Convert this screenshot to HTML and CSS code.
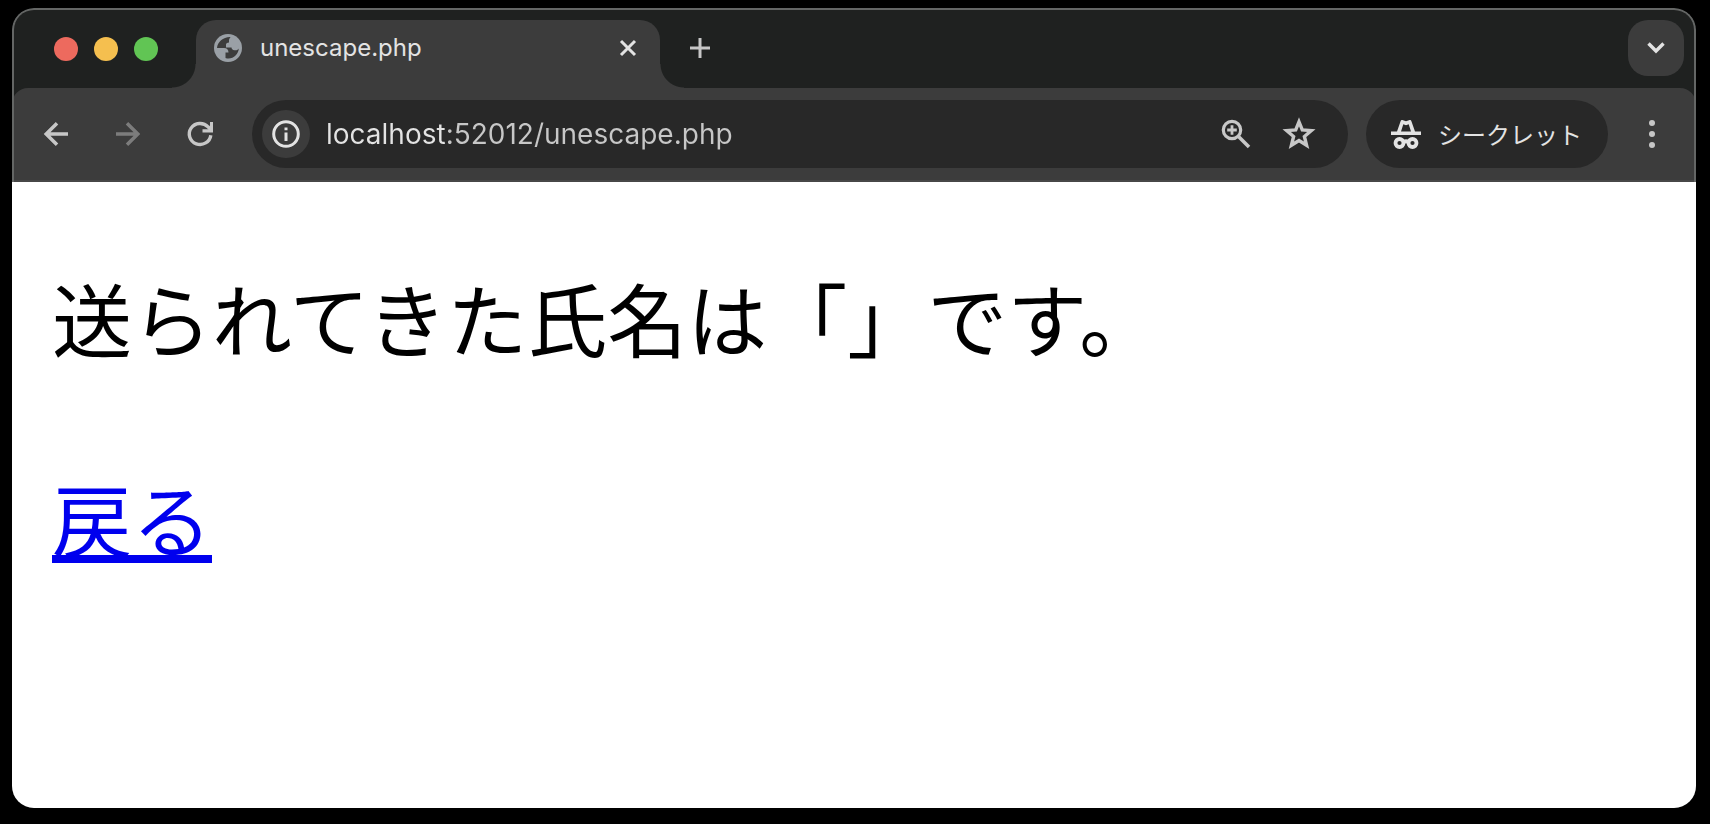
FILE: index.html
```html
<!DOCTYPE html>
<html lang="ja">
<head>
<meta charset="utf-8">
<title>unescape.php</title>
<link rel="stylesheet" href="styles.css">
</head>
<body>
<div class="window">
  <header class="tab-strip">
    <div class="lights">
      <button class="light light-close" aria-label="閉じる"></button>
      <button class="light light-min" aria-label="最小化"></button>
      <button class="light light-max" aria-label="最大化"></button>
    </div>
    <div class="tab">
      <svg class="globe" viewBox="0 0 28 28" aria-hidden="true">
        <circle cx="14" cy="14" r="14" fill="#9aa0a6"/>
        <path fill="#3c3c3c" d="M16 3C9 3 3.500 8 3 14H10C13 14 14.500 16 14.500 18.500H11.500V24C12.500 24.400 13.500 24.500 14.500 24.500C20 24.300 24.500 20 24.800 14.500C24 16 22.500 16.500 20.500 16.200C18.500 16 17.500 15 17.500 13.500H12V10.500C12 9.500 13 8.500 15 8.500V6.500C15 5 15.500 4 16.500 3.500Z"/>
      </svg>
      <span class="tab-title">unescape.php</span>
      <button class="tab-close" aria-label="タブを閉じる">
        <svg viewBox="0 0 16 16"><path d="M1 1 15 15M15 1 1 15" stroke="#e3e3e3" stroke-width="3" fill="none"/></svg>
      </button>
    </div>
    <button class="new-tab" aria-label="新しいタブ">
      <svg viewBox="0 0 20 20"><path d="M10 0V20M0 10H20" stroke="#c7c7c7" stroke-width="3" fill="none"/></svg>
    </button>
    <button class="tab-search" aria-label="タブを検索">
      <svg viewBox="0 0 18 12"><path d="M1.500 1.500 9 9 16.500 1.500" stroke="#e3e3e3" stroke-width="3.400" fill="none"/></svg>
    </button>
  </header>
  <nav class="toolbar">
    <div class="nav-buttons">
      <button class="tool" aria-label="戻る">
        <svg viewBox="0 0 24 24"><path d="M13 1.200 2.200 12 13 22.800M2 12H24" stroke="#c7c7c7" stroke-width="3.500" fill="none"/></svg>
      </button>
      <button class="tool" aria-label="進む" disabled>
        <svg viewBox="0 0 24 24"><path d="M11 1.200 21.800 12 11 22.800M22 12H0" stroke="#7c7c7c" stroke-width="3.500" fill="none"/></svg>
      </button>
      <button class="tool" aria-label="再読み込み">
        <svg viewBox="0 0 24 24"><path d="M22.800 13.200A10.800 10.500 0 1 1 20 4.800L23 7.800" stroke="#c7c7c7" stroke-width="3.400" fill="none"/><path d="M22 0H25V10.500H14.500V7.200H22Z" fill="#c7c7c7"/></svg>
      </button>
    </div>
    <div class="omnibox">
      <button class="site-info" aria-label="サイト情報">
        <svg viewBox="0 0 28 28"><circle cx="14" cy="14" r="12.300" stroke="#e3e3e3" stroke-width="3" fill="none"/><path d="M12.500 12.500H15.500V21H12.500ZM12.500 7.500H15.500V10.300H12.500Z" fill="#e3e3e3"/></svg>
      </button>
      <input class="url" type="text" value="localhost:52012/unescape.php" aria-label="アドレス" spellcheck="false">
      <button class="omni-action" aria-label="ズーム">
        <svg viewBox="0 0 28 28"><circle cx="10" cy="10" r="8.700" stroke="#c7c7c7" stroke-width="3.200" fill="none"/><path d="M16.500 16.500 27 27" stroke="#c7c7c7" stroke-width="3.600"/><path d="M10 5.200V14.800M5.200 10H14.800" stroke="#c7c7c7" stroke-width="2.800"/></svg>
      </button>
      <button class="omni-action star" aria-label="ブックマークに追加">
        <svg viewBox="0 0 34 34"><path d="M17 4.800 20.300 12.900 29.300 13.600 22.400 19.500 24.600 28.300 17 23.600 9.400 28.300 11.600 19.500 4.700 13.600 13.700 12.900Z" stroke="#c7c7c7" stroke-width="3.400" fill="none"/></svg>
      </button>
    </div>
    <button class="incognito">
      <svg viewBox="0 0 30 29" aria-hidden="true"><path fill="#e3e3e3" fill-rule="evenodd" d="M0 11.500H6L9.500 1.500C9.900 .3 10.800-.200 12 .200L15 1.200 18 .200C19.200-.200 20.100.300 20.500 1.500L24 11.500H30V15H0ZM10 11.500H20L17.700 4.200 15 5.200 12.300 4.200Z"/><g fill="none" stroke="#e3e3e3" stroke-width="3.800"><circle cx="8.500" cy="23" r="4"/><circle cx="21.500" cy="23" r="4"/><path d="M12.500 22Q15 20.500 17.500 22"/></g></svg>
      <span>シークレット</span>
    </button>
    <button class="menu" aria-label="メニュー">
      <svg viewBox="0 0 6 28"><g fill="#c7c7c7"><circle cx="3" cy="3" r="3"/><circle cx="3" cy="14" r="3"/><circle cx="3" cy="25" r="3"/></g></svg>
    </button>
  </nav>
  <main class="page">
    <p>送られてきた氏名は「」です。</p>
    <p><a href="#">戻る</a></p>
  </main>
</div>
</body>
</html>
```
FILE: styles.css
```css
* {
  box-sizing: border-box;
}

body {
  margin: 0;
  min-height: 100vh;
  padding: 8px 14px 16px 12px;
  display: flex;
  background: #000;
  font-family: Inter, "Noto Sans CJK JP", sans-serif;
}

button {
  padding: 0;
  border: 0;
  background: none;
  color: inherit;
  font: inherit;
  flex: none;
  display: flex;
  align-items: center;
  justify-content: center;
}

svg {
  display: block;
  flex: none;
  overflow: visible;
}

.window {
  position: relative;
  flex: 1;
  min-width: 0;
  display: flex;
  flex-direction: column;
  border-radius: 22px;
  overflow: hidden;
  background: #1f2120;
}

/* hairline frame around the dark chrome area */
.window::after {
  content: "";
  position: absolute;
  inset: 0 0 auto;
  height: 172px;
  border: 2px solid #646665;
  border-bottom: 0;
  border-radius: 22px 22px 0 0;
  pointer-events: none;
}

.tab-strip {
  height: 80px;
  padding: 12px 12px 0 42px;
  display: flex;
}

.lights {
  width: 142px;
  height: 58px;
  display: flex;
  align-items: center;
  gap: 16px;
}

.light {
  width: 24px;
  height: 24px;
  border-radius: 50%;
}

.light-close { background: #ed6a5e; }
.light-min { background: #f5bf4f; }
.light-max { background: #61c554; }

.tab {
  position: relative;
  width: 464px;
  height: 68px;
  padding: 0 24px 12px 18px;
  display: flex;
  align-items: center;
  border-radius: 20px 20px 0 0;
  background: #3c3c3c;
}

.tab::before,
.tab::after {
  content: "";
  position: absolute;
  bottom: 0;
  width: 24px;
  height: 24px;
}

.tab::before {
  right: 100%;
  background: radial-gradient(circle at 0 0, transparent 23px, #3c3c3c 24px);
}

.tab::after {
  left: 100%;
  background: radial-gradient(circle at 100% 0, transparent 23px, #3c3c3c 24px);
}

.globe {
  width: 28px;
  height: 28px;
}

.tab-title {
  flex: 1;
  margin-left: 18px;
  color: #e3e3e3;
  font-size: 24px;
  line-height: 32px;
}

.tab-close svg {
  width: 16px;
  height: 16px;
}

.new-tab {
  width: 80px;
  height: 56px;
}

.new-tab svg {
  width: 20px;
  height: 20px;
}

.tab-search {
  width: 56px;
  height: 56px;
  margin-left: auto;
  border-radius: 20px;
  background: #3c3c3c;
}

.tab-search svg {
  width: 18px;
  height: 12px;
}

.toolbar {
  height: 94px;
  padding: 12px 28px 12px 32px;
  display: flex;
  align-items: center;
  border-bottom: 2px solid #474747;
  border-radius: 16px 16px 0 0;
  background: #3c3c3c;
}

.nav-buttons {
  display: flex;
  gap: 48px;
}

.tool svg {
  width: 24px;
  height: 24px;
}

.omnibox {
  flex: 1;
  min-width: 0;
  height: 68px;
  margin-left: 40px;
  padding: 0 32px 0 10px;
  display: flex;
  align-items: center;
  border-radius: 34px;
  background: #282828;
}

.site-info {
  width: 48px;
  height: 48px;
  border-radius: 50%;
  background: #3c3c3c;
}

.site-info svg,
.omni-action svg {
  width: 28px;
  height: 28px;
}

.url {
  flex: 1;
  min-width: 0;
  height: 40px;
  margin: 0 16px;
  padding: 0;
  border: 0;
  outline: 0;
  background: linear-gradient(90deg, #e3e3e3 120px, #c7c7c7 120px);
  -webkit-background-clip: text;
  background-clip: text;
  -webkit-text-fill-color: transparent;
  font-family: inherit;
  font-size: 28px;
  line-height: 40px;
}

.omni-action.star {
  margin-left: 32px;
}

.star svg {
  width: 34px;
  height: 34px;
}

.incognito {
  height: 68px;
  margin-left: 18px;
  padding: 0 26px 0 25px;
  gap: 17px;
  border-radius: 34px;
  background: #282828;
  color: #e3e3e3;
  font-size: 24px;
}

.incognito span {
  padding-bottom: 2px;
}

.incognito svg {
  width: 30px;
  height: 29px;
}

.menu {
  width: 32px;
  margin-left: 28px;
}

.menu svg {
  width: 6px;
  height: 28px;
}

.page {
  flex: 1;
  padding: 74px 40px 0;
  background: #fff;
  color: #000;
  font-family: "Noto Sans CJK JP", sans-serif;
  font-size: 80px;
  font-weight: 400;
  line-height: 120px;
}

.page p {
  margin: 0 0 80px;
}

.page a {
  color: #0000ee;
  text-decoration: underline;
  text-decoration-thickness: 8px;
  text-decoration-skip-ink: none;
}
```
